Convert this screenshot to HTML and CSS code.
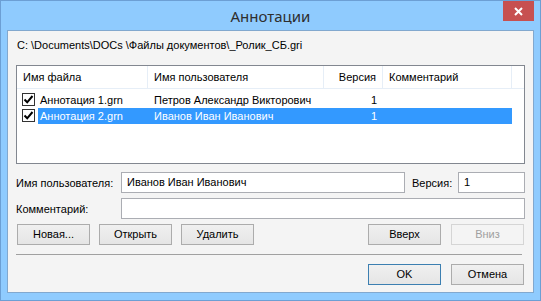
FILE: index.html
```html
<html>
<head>
	<link rel="stylesheet" href="styles.css">
</head>
<body>

<div class="window">
	<div class="titlebar">
		<span></span>
		<div class="title">Аннотации</div>
		<div class="close">
			<svg width="9" height="9" viewBox="0 0 9 9"><path d="M1 1 L8 8 M8 1 L1 8" stroke="#fff" stroke-width="2"/></svg>
		</div>
	</div>
	<div class="client">
		<div class="path">C: \Documents\DOCs \Файлы документов\_Ролик_СБ.gri</div>

		<div class="list">
			<div class="list-head">
				<div class="head-cell col-file">Имя файла</div>
				<div class="head-cell col-user">Имя пользователя</div>
				<div class="head-cell col-ver">Версия</div>
				<div class="head-cell col-comment">Комментарий</div>
			</div>
			<div class="list-row">
				<div class="check-cell"><span class="check"><svg width="11" height="11" viewBox="0 0 11 11"><path d="M1.5 5.5 L4.2 8.3 L9.5 2" stroke="#000" stroke-width="2" fill="none"/></svg></span></div>
				<div class="cells">
					<div class="cell col-file">Аннотация 1.grn</div>
					<div class="cell col-user">Петров Александр Викторович</div>
					<div class="cell col-ver">1</div>
					<div class="cell col-comment"></div>
				</div>
			</div>
			<div class="list-row">
				<div class="check-cell"><span class="check"><svg width="11" height="11" viewBox="0 0 11 11"><path d="M1.5 5.5 L4.2 8.3 L9.5 2" stroke="#000" stroke-width="2" fill="none"/></svg></span></div>
				<div class="cells selected">
					<div class="cell col-file">Аннотация 2.grn</div>
					<div class="cell col-user">Иванов Иван Иванович</div>
					<div class="cell col-ver">1</div>
					<div class="cell col-comment"></div>
				</div>
			</div>
		</div>

		<div class="form-row">
			<label class="label">Имя пользователя:</label>
			<div class="input input-user">Иванов Иван Иванович</div>
			<label class="label label-ver">Версия:</label>
			<div class="input input-ver">1</div>
		</div>
		<div class="form-row">
			<label class="label">Комментарий:</label>
			<div class="input input-comment"></div>
		</div>

		<div class="buttons">
			<div class="button">Новая...</div>
			<div class="button">Открыть</div>
			<div class="button">Удалить</div>
			<div class="spacer"></div>
			<div class="button">Вверх</div>
			<div class="button disabled">Вниз</div>
		</div>

		<div class="separator"></div>

		<div class="buttons bottom">
			<div class="spacer"></div>
			<div class="button default">OK</div>
			<div class="button">Отмена</div>
		</div>
	</div>
</div>

</body>
</html>
```

FILE: styles.css
```css
body{
	margin: 0;
	font-family: "Liberation Sans", Arial, sans-serif;
	font-size: 11px;
	color: #000;
}
.window{
	width: 541px;
	height: 301px;
	box-sizing: border-box;
	border: 1px solid #6c9fd4;
	background: #8fcbfe;
	padding: 0 6px 7px 6px;
	display: flex;
	flex-direction: column;
}
.titlebar{
	height: 29px;
	flex: none;
	display: grid;
	grid-template-columns: 1fr auto 1fr;
}
.title{
	font-family: "Noto Sans", sans-serif;
	font-size: 15px;
	line-height: 30px;
	color: #2e2e2e;
}
.close{
	justify-self: end;
	width: 31px;
	height: 20px;
	margin-right: 0;
	background: #c75050;
	display: flex;
	align-items: center;
	justify-content: center;
}
.client{
	flex: 1;
	background: #f4f4f4;
	border: 1px solid #82a8ce;
	padding: 0 8px 7px 8px;
	display: flex;
	flex-direction: column;
}
.path{
	line-height: 13px;
	margin-top: 8px;
	padding-left: 1px;
}

/* list view */
.list{
	margin-top: 13px;
	height: 97px;
	border: 1px solid #828790;
	background: #fff;
}
.list-head{
	display: flex;
	height: 22px;
	border-bottom: 1px solid #e6eef7;
}
.head-cell{
	line-height: 22px;
	border-right: 1px solid #e6eef7;
	padding: 0 6px;
	box-sizing: border-box;
}
.head-cell.col-file{ width: 131px; }
.head-cell.col-user{ width: 176px; }
.head-cell.col-ver{ width: 59px; text-align: right; }
.head-cell.col-comment{ width: 129px; }

.list-row{
	display: flex;
	height: 16px;
}
.list-head + .list-row{
	margin-top: 3px;
}
.check-cell{
	width: 21px;
	padding-left: 5px;
	box-sizing: border-box;
	padding-top: 1px;
}
.check{
	display: block;
	width: 11px;
	height: 11px;
	border: 1px solid #333;
	background: #fff;
}
.check svg{
	display: block;
}
.cells{
	display: flex;
	line-height: 16px;
}
.cells.selected{
	background: #3399ff;
	color: #fff;
}
.cell{
	box-sizing: border-box;
	white-space: nowrap;
	overflow: hidden;
}
.cell.col-file{ width: 110px; padding-left: 2px; }
.cell.col-user{ width: 176px; padding-left: 6px; }
.cell.col-ver{ width: 59px; padding-right: 6px; text-align: right; }
.cell.col-comment{ width: 129px; }

/* fields */
.form-row{
	display: flex;
	align-items: center;
	margin-top: 5px;
}
.list + .form-row{
	margin-top: 8px;
}
.label{
	width: 105px;
}
.label-ver{
	width: 46px;
	margin-left: 7px;
}
.input{
	height: 21px;
	box-sizing: border-box;
	border: 1px solid #abadb3;
	background: #fff;
	line-height: 19px;
	padding-left: 5px;
}
.input-user{ flex: 1; }
.input-ver{ width: 67px; }
.input-comment{ flex: 1; }

/* buttons */
.buttons{
	display: flex;
	margin-top: 5px;
	padding-left: 1px;
	padding-right: 1px;
}
.buttons.bottom{
	margin-top: 9px;
}
.spacer{
	flex: 1;
}
.button{
	width: 73px;
	height: 21px;
	box-sizing: border-box;
	border: 1px solid #acacac;
	background: linear-gradient(#f0f0f0, #e5e5e5);
	text-align: center;
	line-height: 19px;
	margin-right: 9px;
}
.button:last-child{
	margin-right: 0;
}
.button.default{
	border-color: #3c7fb1;
	margin-right: 10px;
}
.spacer + .button{
	margin-right: 10px;
}
.button.disabled{
	border-color: #d5d5d5;
	background: #f4f4f4;
	color: #a0a0a0;
}
.separator{
	height: 1px;
	background: #a0a0a0;
	margin-top: 9px;
	margin-right: 3px;
}
```
